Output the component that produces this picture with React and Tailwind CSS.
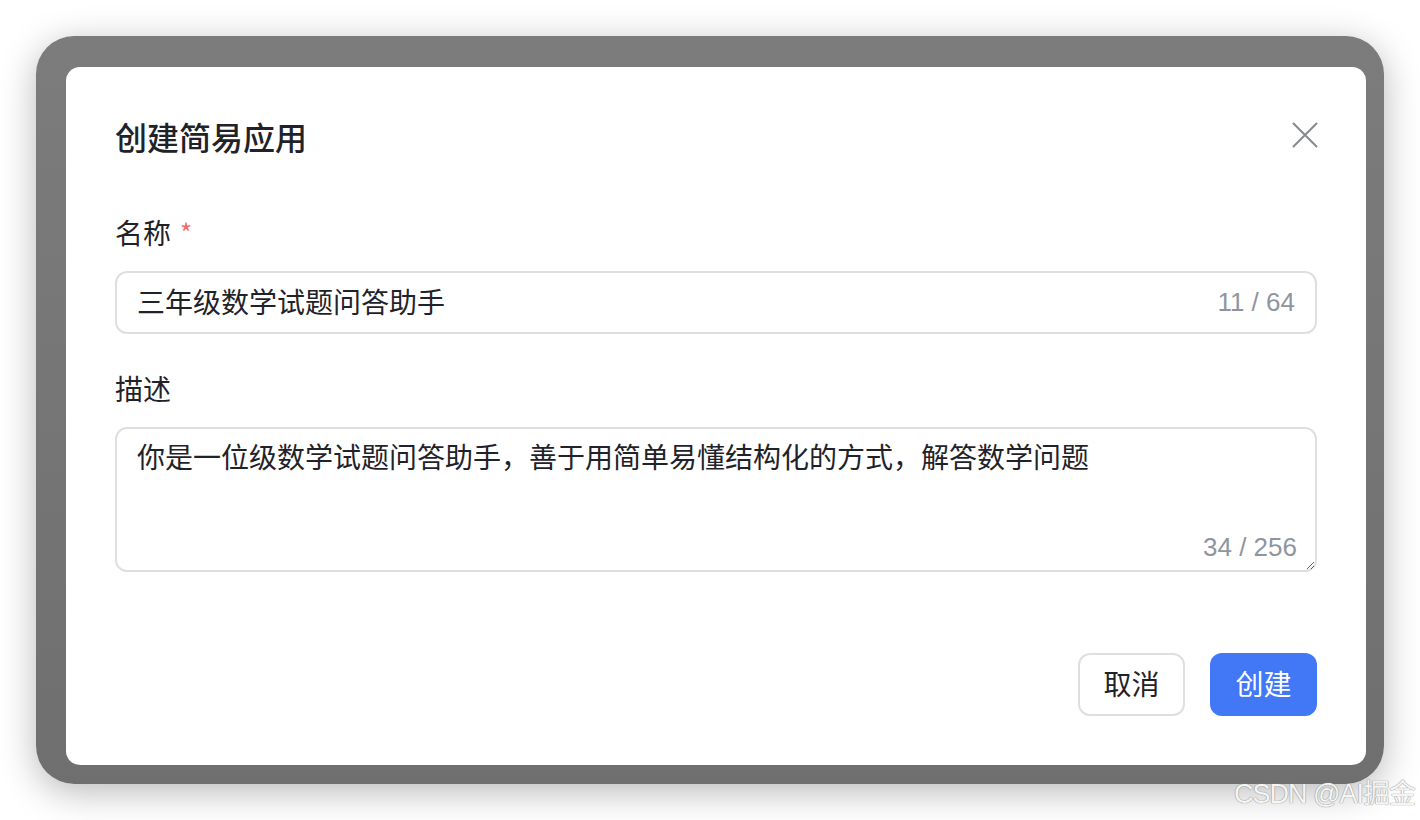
import React from 'react';

const font = { fontFamily: '"Noto Sans CJK SC", "Noto Sans", sans-serif' };
const digits = { fontFamily: '"Liberation Sans", "Noto Sans CJK SC", sans-serif' };

export default function App() {
  return (
    <div className="relative w-[1420px] h-[820px] bg-white overflow-hidden" style={font}>
      <div className="absolute left-[36px] top-[36px] w-[1348px] h-[748px] rounded-[38px] bg-linear-to-b from-[#7b7c7b] to-[#6e6f6e] pt-[31px] pl-[30px] pr-[18px] pb-[19px] shadow-[0_8px_36px_rgba(0,0,0,0.28)]">
        <div className="w-full h-full bg-white rounded-[14px] flex flex-col px-[49px] pt-[49px] pb-[49px]">
          <div className="flex items-center justify-between">
            <h1 className="text-[32px] leading-[40px] font-medium text-[#1f2329]">创建简易应用</h1>
            <svg className="w-[26px] h-[26px] -mr-[1px] -mt-[2px]" viewBox="0 0 26 26" fill="none" stroke="#86898f" strokeWidth="2" strokeLinecap="round">
              <path d="M1.5 1.5L24.5 24.5M24.5 1.5L1.5 24.5" />
            </svg>
          </div>

          <label className="mt-[56px] text-[28px] leading-[40px] text-[#1f2329] flex items-center">
            名称<span className="ml-[9px] text-[#ee6b66] text-[26px]">*</span>
          </label>
          <div className="mt-[19px] h-[63px] border-2 border-[#dedfe0] rounded-[12px] flex items-center pl-[20px] pr-[20px] pb-[4px]">
            <input
              readOnly
              value="三年级数学试题问答助手"
              className="flex-1 outline-none bg-transparent text-[28px] text-[#1f2329]"
              style={font}
            />
            <span className="text-[26px] text-[#8f959e] pt-[3px]" style={digits}>11 / 64</span>
          </div>

          <label className="mt-[34px] text-[28px] leading-[40px] text-[#1f2329]">描述</label>
          <div className="relative mt-[19px] h-[145px]">
            <textarea
              readOnly
              value="你是一位级数学试题问答助手，善于用简单易懂结构化的方式，解答数学问题"
              className="w-full h-full border-2 border-[#dedfe0] rounded-[12px] outline-none resize-y px-[20px] pt-[7px] text-[28px] leading-[40px] text-[#1f2329]"
              style={font}
            />
            <span className="absolute right-[20px] bottom-[10px] text-[26px] leading-[30px] text-[#8f959e]" style={digits}>34 / 256</span>
          </div>

          <div className="mt-auto flex justify-end gap-[25px]">
            <button className="w-[107px] h-[63px] rounded-[12px] border-2 border-[#dedfe0] bg-white text-[28px] text-[#1f2329] pb-[3px]">取消</button>
            <button className="w-[107px] h-[63px] rounded-[12px] bg-[#4277f6] text-[28px] text-white pb-[3px]">创建</button>
          </div>
        </div>
      </div>

      <div className="absolute right-[5px] top-[776px] text-[27px] leading-[36px] tracking-[-1px] text-[#f5f5f5] [text-shadow:0_0_1px_#8a8a8a,0_0_1px_#8a8a8a]" style={digits}>
        CSDN @AI掘金
      </div>
    </div>
  );
}
